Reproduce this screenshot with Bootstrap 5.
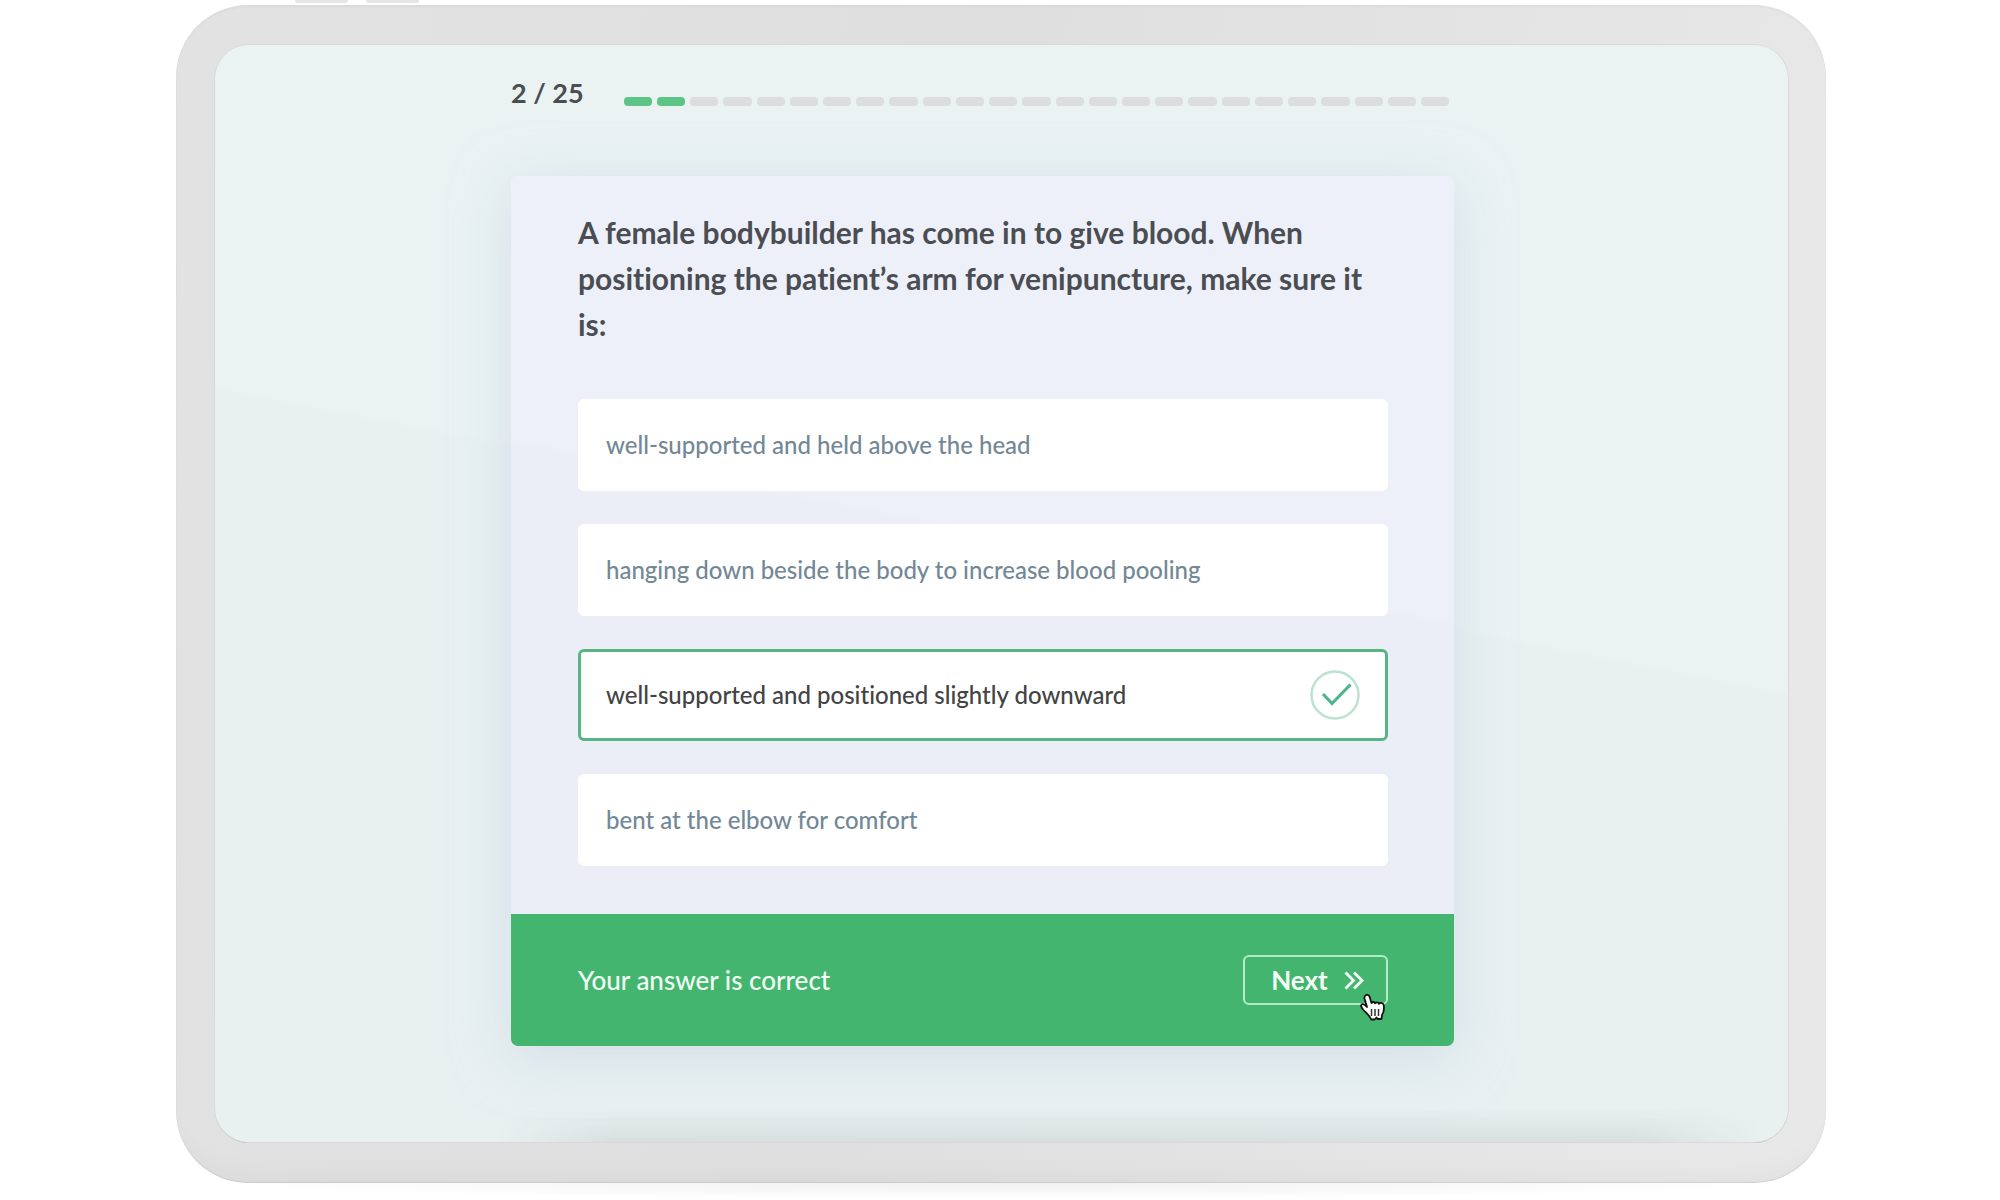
<!DOCTYPE html>
<html lang="en">
<head>
<meta charset="utf-8">
<meta name="viewport" content="width=device-width, initial-scale=1">
<title>Practice quiz</title>
<link href="https://cdn.jsdelivr.net/npm/bootstrap@5.3.0/dist/css/bootstrap.min.css" rel="stylesheet">
<style>
  body { font-family: Lato, "Open Sans", sans-serif; font-variant-ligatures: none; background: #fff; color: #4a4d52; overflow-x: hidden; }
  .device { max-width: 1652px; padding-left: 2px; }
  .device-keys { height: 5px; padding-left: 119px; gap: 18px; }
  .device-keys span { width: 53px; height: 3px; background: #e6e6e6; border-radius: 0 0 2px 2px; }
  .bezel { padding: 40px 38px 41px 39px; border-radius: 72px; background: linear-gradient(100deg, #e2e2e2, #dfdfdf 45%, #e8e8e8 95%); box-shadow: inset 0 -34px 30px -30px rgba(0,0,0,.04), inset 0 2px 2px rgba(0,0,0,.03), inset 0 -1px 1px rgba(0,0,0,.08); }
  .floor-shadow { height: 16px; margin: 0 22px; background: radial-gradient(ellipse 50% 100% at 50% 0, rgba(0,0,0,.06), transparent); }
  .screen { border-radius: 34px; padding: 26px 38px 96px 0; background: linear-gradient(191deg, #eaf3f2 46%, #e8f1f0 46.5%); box-shadow: 0 0 0 1px #d8dada, 0 1px 0 0 #adb1b0; }
  .screen::after { content: ""; position: absolute; left: 18%; right: 0; bottom: 0; height: 34px; border-radius: 0 0 34px 0; background: linear-gradient(to top, rgba(186,196,194,.38), transparent); -webkit-mask-image: linear-gradient(to right, transparent, #000 9%, #000 88%, transparent 98%); mask-image: linear-gradient(to right, transparent, #000 9%, #000 88%, transparent 98%); pointer-events: none; }
  .quiz { max-width: 943px; }
  .quiz-head { gap: 40px; padding-right: 5px; margin-bottom: 62px; }
  .counter { font-size: 27px; line-height: 43px; font-weight: 700; white-space: nowrap; }
  .steps { gap: 5px; padding-top: 18px; }
  .steps span { flex: 1 1 0; height: 9px; border-radius: 4px; background: #dcdede; }
  .steps .done { background: #5cc485; }
  .quiz-card { border-radius: 6px; background: linear-gradient(191deg, #eef0f9 42%, #ebedf7 43%); box-shadow: 0 10px 56px rgba(196,208,230,.6); }
  .quiz-body { padding: 33px 66px 48px 67px; }
  .question { font-size: 30px; line-height: 46px; font-weight: 700; margin-bottom: 52px; }
  .answers { gap: 33px; }
  .answer { height: 92px; padding: 0 25px; border: 3px solid #fff; border-radius: 6px; background: #fff; color: #738896; font-size: 24px; font-weight: 500; text-align: left; }
  .btn-check:checked + .answer { border-color: #56b581; background: #fff; color: #434343; }
  .quiz-foot { height: 132px; padding: 0 66px 0 67px; border-radius: 0 0 7px 7px; background: #43b56f; color: #f2fff5; font-size: 26px; font-weight: 500; }
  .next-btn { height: 50px; width: 145px; border: 2px solid #b4ebc6; border-radius: 6px; color: #f4fff7; font-size: 26px; font-weight: 700; gap: 16px; padding: 0 0 0 4px; }
  .next-btn:hover { color: #fff; border-color: #fff; }
  .pointer { right: 1px; bottom: -18px; pointer-events: none; }
</style>
</head>
<body>
<main class="device mx-auto">
  <div class="device-keys d-flex"><span></span><span></span></div>
  <div class="bezel">
    <div class="screen position-relative">
      <div class="quiz mx-auto">
        <header class="quiz-head d-flex align-items-center">
          <div class="counter">2 / 25</div>
          <div class="steps d-flex flex-grow-1" role="progressbar" aria-label="Question progress" aria-valuenow="2" aria-valuemin="0" aria-valuemax="25">
            <span class="done"></span><span class="done"></span><span></span><span></span><span></span>
            <span></span><span></span><span></span><span></span><span></span>
            <span></span><span></span><span></span><span></span><span></span>
            <span></span><span></span><span></span><span></span><span></span>
            <span></span><span></span><span></span><span></span><span></span>
          </div>
        </header>
        <form class="quiz-card">
          <div class="quiz-body">
            <h1 class="question" id="question">A female bodybuilder has come in to give blood. When positioning the patient’s arm for venipuncture, make sure it is:</h1>
            <div class="answers d-flex flex-column" role="radiogroup" aria-labelledby="question">
              <div>
                <input class="btn-check" type="radio" name="answer" id="a1">
                <label class="answer btn d-flex align-items-center" for="a1">well-supported and held above the head</label>
              </div>
              <div>
                <input class="btn-check" type="radio" name="answer" id="a2">
                <label class="answer btn d-flex align-items-center" for="a2">hanging down beside the body to increase blood pooling</label>
              </div>
              <div>
                <input class="btn-check" type="radio" name="answer" id="a3" checked>
                <label class="answer btn d-flex align-items-center justify-content-between" for="a3">well-supported and positioned slightly downward
                  <svg width="50" height="50" viewBox="0 0 50 50" fill="none" aria-hidden="true"><circle cx="25" cy="25" r="23.5" stroke="#bce3d0" stroke-width="2.5"/><path d="M13 24l9 9.500L40.500 14.500" stroke="#4db58b" stroke-width="3.200"/></svg>
                </label>
              </div>
              <div>
                <input class="btn-check" type="radio" name="answer" id="a4">
                <label class="answer btn d-flex align-items-center" for="a4">bent at the elbow for comfort</label>
              </div>
            </div>
          </div>
          <div class="quiz-foot d-flex align-items-center justify-content-between">
            <span>Your answer is correct</span>
            <div class="position-relative">
              <button type="button" class="next-btn btn d-flex align-items-center justify-content-center">Next
                <svg width="20" height="19" viewBox="0 0 20 19" fill="none" stroke="currentColor" stroke-width="2.800" aria-hidden="true"><path d="M1.500 1.500l8 8-8 8M10 1.500l8 8-8 8"/></svg>
              </button>
              <svg class="pointer position-absolute" width="28" height="30" viewBox="0 0 28 30" aria-hidden="true">
                <path d="M6 3c1.500-2 4-1.500 4.700 1l1.800 6c1-1.500 3-1.300 3.700.3 1-1.400 3-1.200 3.800.5 1.500-1.600 4.500-1 4.800 1.700.5 4 .2 6.500-1.800 9.500l-.5 4h-4l-1-1.500-1.800 2h-3.500c-1.500-4-5-6.500-8.200-10-2-2.500-2.500-4.500-1-5.300 1.800-.6 3.500.8 5 2.800L5.500 5.500C5.300 4.500 5.400 3.700 6 3z" fill="#fff" stroke="#111" stroke-width="1.800" stroke-linejoin="round"/>
                <path d="M12.500 16v7M16 16v7M19.500 16v7" stroke="#333" stroke-width="1.500"/>
              </svg>
            </div>
          </div>
        </form>
      </div>
    </div>
  </div>
  <div class="floor-shadow"></div>
</main>
<script src="https://cdn.jsdelivr.net/npm/bootstrap@5.3.0/dist/js/bootstrap.bundle.min.js"></script>
</body>
</html>
